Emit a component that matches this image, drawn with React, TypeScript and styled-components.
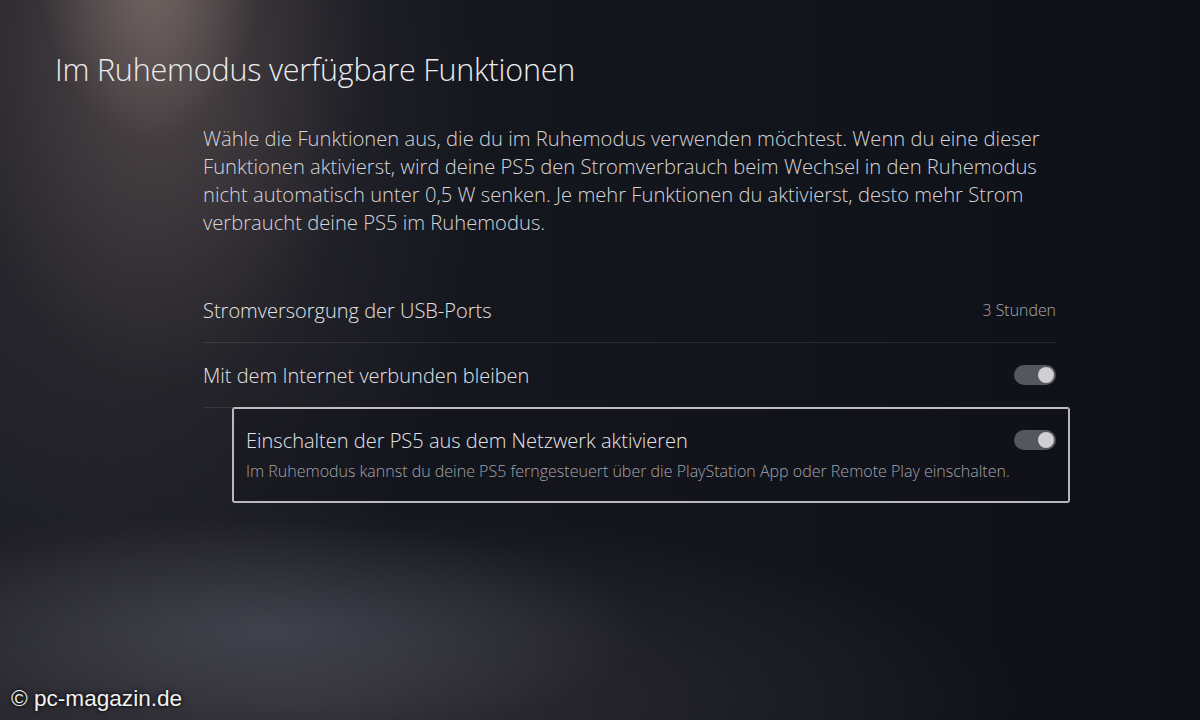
import React from "react";
import styled, { createGlobalStyle } from "styled-components";

const GlobalStyle = createGlobalStyle`
  html, body {
    margin: 0;
    padding: 0;
    background: #12141b;
  }
  * { box-sizing: border-box; }
`;

const Screen = styled.div`
  position: relative;
  width: 1200px;
  height: 720px;
  overflow: hidden;
  font-family: "Open Sans", "Noto Sans", sans-serif;
  font-weight: 300;
  color: #e6e6ea;
  background:
    radial-gradient(ellipse 110px 170px at 150px -30px, rgba(175, 152, 142, 0.42), rgba(175, 152, 142, 0) 100%),
    radial-gradient(ellipse 210px 360px at 160px 30px, rgba(140, 118, 112, 0.34), rgba(140, 118, 112, 0) 100%),
    radial-gradient(ellipse 340px 560px at 150px 120px, rgba(105, 92, 92, 0.28), rgba(105, 92, 92, 0) 100%),
    radial-gradient(ellipse 380px 110px at 270px 630px, rgba(92, 98, 112, 0.45), rgba(92, 98, 112, 0) 100%),
    radial-gradient(ellipse 720px 190px at 300px 700px, rgba(72, 66, 72, 0.55), rgba(72, 66, 72, 0) 100%),
    linear-gradient(90deg, #1c1d25 0%, #15171f 35%, #12141c 70%, #0e1017 100%);
  padding: 50px 0 0 55px;
`;

const Title = styled.h1`
  margin: 0;
  font-size: 30.5px;
  line-height: 38px;
  font-weight: 300;
  color: #ececef;
  letter-spacing: -0.2px;
`;

const Content = styled.div`
  margin: 36px 0 0 148px;
  width: 853px;
  display: flex;
  flex-direction: column;
`;

const Intro = styled.p`
  margin: 0 0 42px;
  font-size: 20.2px;
  line-height: 28px;
  color: #d4d4d9;
  white-space: nowrap;
`;

const Row = styled.div<{ $divider?: boolean }>`
  height: 65px;
  display: flex;
  align-items: center;
  justify-content: space-between;
  border-bottom: 1px solid ${(p) => (p.$divider ? "rgba(255,255,255,0.09)" : "transparent")};
`;

const Label = styled.span`
  font-size: 20px;
  color: #e2e2e6;
`;

const Value = styled.span`
  font-size: 15.9px;
  color: #a9a9b1;
`;

const Track = styled.span`
  position: relative;
  display: inline-block;
  width: 42px;
  height: 20px;
  border-radius: 10px;
  background: #55575f;
`;

const Knob = styled.span`
  position: absolute;
  top: 2px;
  right: 2px;
  width: 16px;
  height: 16px;
  border-radius: 50%;
  background: #cfcfd3;
`;

const SubCard = styled.div`
  position: relative;
  margin: -1px -14px 0 29px;
  padding: 18px 12px 18px;
  border: 2px solid #b9b8c2;
  border-top-color: #c4bcbc;
  border-radius: 3px;
  background: rgba(16, 18, 25, 0.35);
  display: flex;
  flex-direction: column;
  gap: 7px;
`;

const CardHead = styled.div`
  display: flex;
  align-items: center;
  justify-content: space-between;
  height: 26px;
`;

const CardTitle = styled.span`
  font-size: 20px;
  color: #e4e4e8;
`;

const CardHint = styled.span`
  font-size: 16px;
  line-height: 23px;
  color: #a3a3ab;
`;

const Watermark = styled.div`
  position: absolute;
  left: 11px;
  bottom: 8px;
  font-family: "Liberation Sans", Arial, sans-serif;
  font-weight: 400;
  font-size: 22.6px;
  color: #f2f2f2;
  text-shadow: 0 0 3px rgba(0, 0, 0, 0.9), 0 0 6px rgba(0, 0, 0, 0.6);
`;

const Toggle = () => (
  <Track>
    <Knob />
  </Track>
);

export default function App() {
  return (
    <>
      <GlobalStyle />
      <Screen>
        <Title>Im Ruhemodus verfügbare Funktionen</Title>
        <Content>
          <Intro>
            Wähle die Funktionen aus, die du im Ruhemodus verwenden möchtest. Wenn du eine dieser
            <br />
            Funktionen aktivierst, wird deine PS5 den Stromverbrauch beim Wechsel in den Ruhemodus
            <br />
            nicht automatisch unter 0,5 W senken. Je mehr Funktionen du aktivierst, desto mehr Strom
            <br />
            verbraucht deine PS5 im Ruhemodus.
          </Intro>
          <Row $divider>
            <Label>Stromversorgung der USB-Ports</Label>
            <Value>3 Stunden</Value>
          </Row>
          <Row $divider>
            <Label>Mit dem Internet verbunden bleiben</Label>
            <Toggle />
          </Row>
          <SubCard>
            <CardHead>
              <CardTitle>Einschalten der PS5 aus dem Netzwerk aktivieren</CardTitle>
              <Toggle />
            </CardHead>
            <CardHint>
              Im Ruhemodus kannst du deine PS5 ferngesteuert über die PlayStation App oder Remote Play einschalten.
            </CardHint>
          </SubCard>
        </Content>
        <Watermark>© pc-magazin.de</Watermark>
      </Screen>
    </>
  );
}
